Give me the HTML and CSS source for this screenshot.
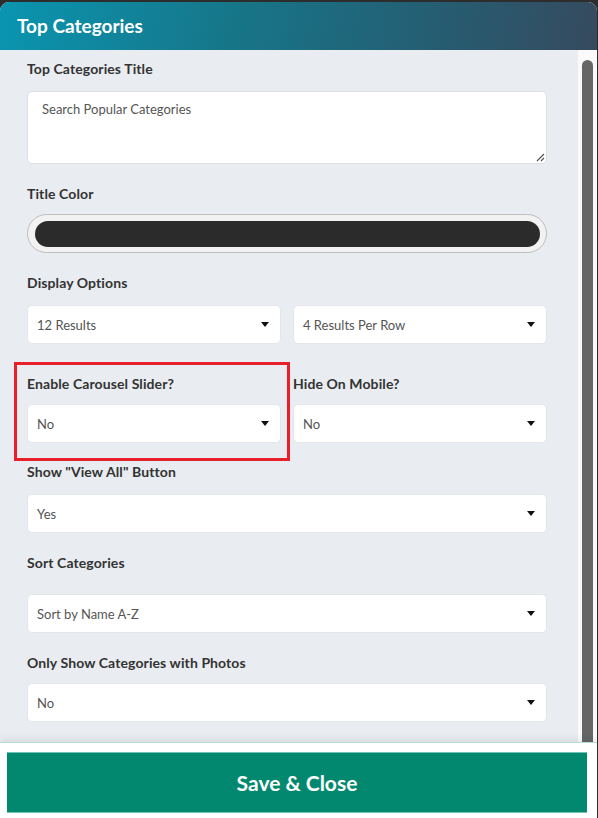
FILE: index.html
```html
<!DOCTYPE html>
<html>
<head>
<meta charset="utf-8">
<link rel="stylesheet" href="styles.css">
</head>
<body>
<div class="modal">
  <header class="modal-header">Top Categories</header>
  <div class="modal-main">
    <div class="content">
      <div class="group">
        <div class="label">Top Categories Title</div>
        <div class="textarea">Search Popular Categories
          <svg class="resize" width="10" height="10" viewBox="0 0 10 10"><path d="M9 2 L2 9 M9 6 L6 9" stroke="#555" stroke-width="1.2" fill="none"/></svg>
        </div>
      </div>
      <div class="group">
        <div class="label label-tight">Title Color</div>
        <div class="color-pill"><div class="color-fill"></div></div>
      </div>
      <div class="group">
        <div class="label">Display Options</div>
        <div class="row">
          <div class="select">12 Results<span class="caret"></span></div>
          <div class="select">4 Results Per Row<span class="caret"></span></div>
        </div>
      </div>
      <div class="group group-spaced">
        <div class="row highlight-row">
          <div class="col">
            <div class="label">Enable Carousel Slider?</div>
            <div class="select">No<span class="caret"></span></div>
          </div>
          <div class="col">
            <div class="label">Hide On Mobile?</div>
            <div class="select">No<span class="caret"></span></div>
          </div>
          <div class="highlight"></div>
        </div>
      </div>
      <div class="group">
        <div class="label">Show "View All" Button</div>
        <div class="select">Yes<span class="caret"></span></div>
      </div>
      <div class="group">
        <div class="label label-loose">Sort Categories</div>
        <div class="select">Sort by Name A-Z<span class="caret"></span></div>
      </div>
      <div class="group">
        <div class="label label-tight">Only Show Categories with Photos</div>
        <div class="select">No<span class="caret"></span></div>
      </div>
    </div>
    <div class="scrollbar"><div class="thumb"></div></div>
  </div>
  <footer class="modal-footer">
    <button class="save-btn">Save &amp; Close</button>
  </footer>
</div>
</body>
</html>
```
FILE: styles.css
```css
* { box-sizing: border-box; }
html, body { margin: 0; padding: 0; }
body {
  background: #2d2d2d;
  font-family: Lato, "Noto Sans", sans-serif;
  width: 598px;
  height: 818px;
  overflow: hidden;
}
.modal {
  margin: 2px 1px 0 0;
  height: 816px;
  background: #fff;
  border-radius: 9px 9px 0 0;
  overflow: hidden;
  display: flex;
  flex-direction: column;
}
.modal-header {
  height: 48px;
  flex: none;
  background: linear-gradient(100deg, #0a95b0 0%, #177588 40%, #245f74 70%, #364a5e 100%);
  color: #fff;
  font-size: 19px;
  font-weight: 700;
  padding-left: 17px;
  display: flex;
  align-items: center;
  padding-bottom: 2px;
}
.modal-main {
  height: 692px;
  flex: none;
  display: flex;
}
.content {
  width: 578px;
  background: #e9ecf0;
  padding: 9px 31px 0 27px;
  overflow: hidden;
}
.scrollbar {
  width: 19px;
  background: #fafafa;
  padding: 10px 0 0 4px;
}
.thumb {
  width: 11px;
  height: 100%;
  background: #666;
  border-radius: 6px 6px 0 0;
}
.group { margin-bottom: 20px; }
.group-spaced { padding-top: 10px; margin-bottom: 19px; }
.label {
  color: #333;
  font-size: 14px;
  font-weight: 700;
  line-height: 20px;
  margin-bottom: 12px;
  letter-spacing: 0.1px;
}
.label-tight { margin-bottom: 10px; }
.label-loose { margin-bottom: 21px; }
.textarea {
  position: relative;
  height: 73px;
  background: #fff;
  border: 1px solid #dcdfe3;
  border-radius: 5px;
  padding: 9px 14px;
  font-size: 13px;
  color: #555;
  line-height: 16px;
}
.resize { position: absolute; right: 1px; bottom: 1px; }
.color-pill {
  height: 39px;
  border-radius: 20px;
  background: #f2f2f2;
  border: 1px solid #bdbdbd;
  padding: 6px 6px 5px 7px;
}
.color-fill {
  height: 100%;
  border-radius: 14px;
  background: #2b2b2b;
}
.row {
  display: grid;
  grid-template-columns: 254px 254px;
  column-gap: 12px;
}
.highlight-row { position: relative; }
.col .label { margin-bottom: 10px; }
.highlight {
  position: absolute;
  left: -13px;
  top: -12px;
  width: 276px;
  height: 99px;
  border: 3px solid #e8202a;
  pointer-events: none;
}
.select {
  height: 39px;
  background: #fff;
  border-radius: 5px;
  border: 1px solid #e3e6ea;
  font-size: 13px;
  color: #555;
  padding: 0 9px;
  display: flex;
  align-items: center;
  justify-content: space-between;
}
.caret {
  width: 0;
  height: 0;
  border-left: 4px solid transparent;
  border-right: 4px solid transparent;
  border-top: 5px solid #111;
  margin-right: 2px;
}
.modal-footer {
  flex: 1;
  background: #fff;
  border-top: 1px solid #b9ddd6;
  box-shadow: 0 -4px 6px rgba(0,0,0,0.06);
  padding: 9px 10px 0 7px;
  position: relative;
}
.save-btn {
  display: block;
  width: 580px;
  height: 61px;
  background: #038870;
  border: none;
  border-top: 1px solid #6fc2b2;
  border-bottom: 1px solid #6fc2b2;
  color: #fff;
  font-family: Lato, "Noto Sans", sans-serif;
  font-size: 21px;
  font-weight: 700;
  padding: 0;
}
```
